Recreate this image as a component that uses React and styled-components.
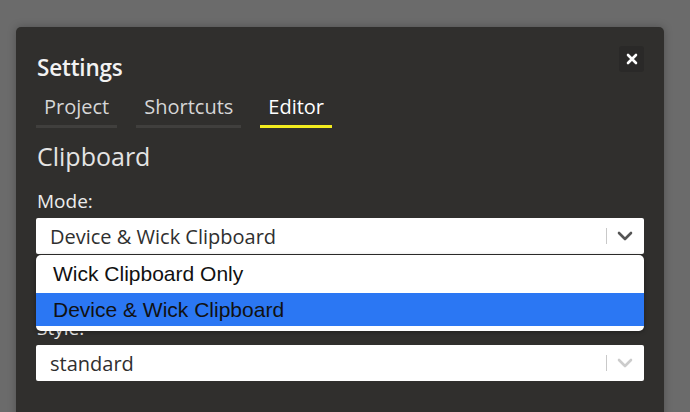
import React from "react";
import styled, { createGlobalStyle } from "styled-components";

const Global = createGlobalStyle`
  html, body { margin: 0; padding: 0; background: #6b6b6b; }
  body { font-family: "Open Sans", "Noto Sans", sans-serif; }
  #root { min-height: 412px; }
`;

const Page = styled.div`
  height: 412px;
  overflow: hidden;
  padding: 27px 26px 0 16px;
  box-sizing: border-box;
`;

const Modal = styled.div`
  background: #302f2d;
  border-radius: 5px 5px 0 0;
  height: 400px;
  padding: 27px 20px 0 20px;
  box-sizing: border-box;
  box-shadow: 0 0 8px rgba(0, 0, 0, 0.25);
`;

const Header = styled.div`
  display: flex;
  align-items: center;
  justify-content: space-between;
  height: 28px;
`;

const Title = styled.h1`
  margin: 0 0 0 1px;
  font-size: 22.5px;
  font-weight: 600;
  color: #f2f2f2;
  letter-spacing: -0.2px;
  line-height: 28px;
`;

const CloseButton = styled.button`
  width: 25px;
  height: 26px;
  border: none;
  border-radius: 3px;
  background: #2a2928;
  display: flex;
  align-items: center;
  justify-content: center;
  padding: 0;
  margin-top: -18px;
`;

const Tabs = styled.div`
  display: flex;
  gap: 19px;
  margin-top: 13px;
`;

const Tab = styled.div`
  padding: 0 8px 6px 8px;
  font-size: 20px;
  color: ${(p) => (p.$active ? "#ffffff" : "#d6d6d6")};
  border-bottom: 3px solid ${(p) => (p.$active ? "#f2ec1e" : "#403f3d")};
  line-height: 24px;
`;

const Section = styled.h2`
  margin: 13px 0 0 1px;
  font-size: 25px;
  font-weight: 400;
  color: #e4e4e4;
  line-height: 30px;
`;

const Group = styled.div`
  margin-top: ${(p) => p.$gap}px;
`;

const Label = styled.div`
  margin: 0 0 6px 1px;
  font-size: 19px;
  color: #ececec;
  line-height: 22px;
`;

const Field = styled.div`
  position: relative;
`;

const Select = styled.div`
  height: 36px;
  background: #ffffff;
  border-radius: 2px;
  display: flex;
  align-items: center;
  padding-left: 14px;
  box-sizing: border-box;
  font-size: 20px;
  color: #2f2f2f;
`;

const Value = styled.span`
  flex: 1;
`;

const Divider = styled.span`
  width: 1px;
  height: 16px;
  background: #c9c9c9;
  margin-right: 10px;
`;

const Chevron = styled.span`
  width: 27px;
  display: flex;
  align-items: center;
`;

const Menu = styled.div`
  position: absolute;
  left: 0;
  right: 0;
  top: 37px;
  background: #ffffff;
  border-radius: 5px;
  padding: 0 0 5px 0;
  box-shadow: 0 1px 4px rgba(0, 0, 0, 0.35);
  z-index: 2;
  font-family: "Liberation Sans", Arial, sans-serif;
`;

const Option = styled.div`
  height: ${(p) => (p.$first ? "38px" : "33px")};
  display: flex;
  align-items: center;
  padding-left: 17px;
  font-size: 21px;
  color: #111111;
  background: ${(p) => (p.$selected ? "#2b77f3" : "transparent")};
  border-radius: ${(p) => (p.$first ? "5px 5px 0 0" : "0")};
`;

function ChevronIcon({ color }) {
  return (
    <svg width="16" height="10" viewBox="0 0 16 10">
      <path d="M2 2 L8 8 L14 2" fill="none" stroke={color} strokeWidth="2.6" strokeLinecap="round" strokeLinejoin="round" />
    </svg>
  );
}

export default function App() {
  return (
    <>
      <Global />
      <Page>
        <Modal>
          <Header>
            <Title>Settings</Title>
            <CloseButton aria-label="Close">
              <svg width="12" height="12" viewBox="0 0 12 12">
                <path d="M2 2 L10 10 M10 2 L2 10" stroke="#ffffff" strokeWidth="2.6" strokeLinecap="round" />
              </svg>
            </CloseButton>
          </Header>
          <Tabs>
            <Tab>Project</Tab>
            <Tab>Shortcuts</Tab>
            <Tab $active>Editor</Tab>
          </Tabs>
          <Section>Clipboard</Section>
          <Group $gap={19}>
            <Label>Mode:</Label>
            <Field>
              <Select>
                <Value>Device &amp; Wick Clipboard</Value>
                <Divider />
                <Chevron>
                  <ChevronIcon color="#555555" />
                </Chevron>
              </Select>
              <Menu>
                <Option $first>Wick Clipboard Only</Option>
                <Option $selected>Device &amp; Wick Clipboard</Option>
              </Menu>
            </Field>
          </Group>
          <Group $gap={63}>
            <Label>Style:</Label>
            <Field>
              <Select>
                <Value>standard</Value>
                <Divider />
                <Chevron>
                  <ChevronIcon color="#cccccc" />
                </Chevron>
              </Select>
            </Field>
          </Group>
        </Modal>
      </Page>
    </>
  );
}
